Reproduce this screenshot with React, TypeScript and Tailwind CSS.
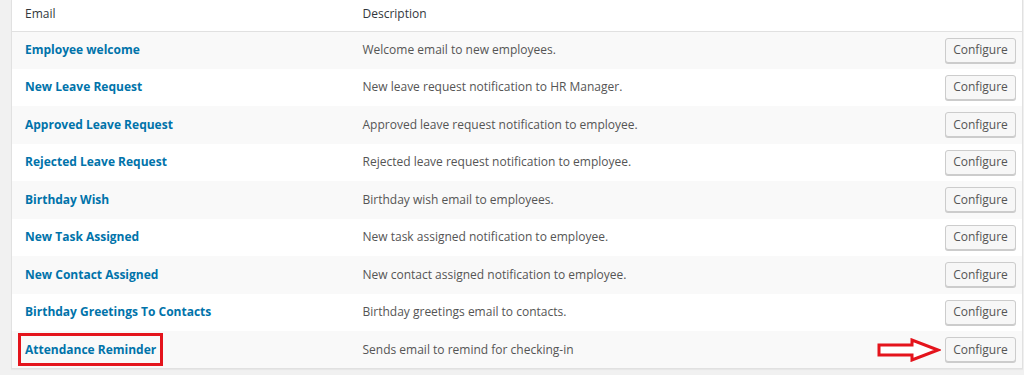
const rows = [
  { name: "Employee welcome", desc: "Welcome email to new employees." },
  { name: "New Leave Request", desc: "New leave request notification to HR Manager." },
  { name: "Approved Leave Request", desc: "Approved leave request notification to employee." },
  { name: "Rejected Leave Request", desc: "Rejected leave request notification to employee." },
  { name: "Birthday Wish", desc: "Birthday wish email to employees." },
  { name: "New Task Assigned", desc: "New task assigned notification to employee." },
  { name: "New Contact Assigned", desc: "New contact assigned notification to employee." },
  { name: "Birthday Greetings To Contacts", desc: "Birthday greetings email to contacts." },
  { name: "Attendance Reminder", desc: "Sends email to remind for checking-in", marked: true },
];

function RedArrow() {
  return (
    <svg width="64" height="24" viewBox="0 0 64 24" className="shrink-0">
      <polygon
        points="2,7 35,7 35,2 61,12 35,22 35,17 2,17"
        fill="#fff"
        stroke="#e4141c"
        strokeWidth="3"
        strokeLinejoin="miter"
      />
    </svg>
  );
}

function ConfigureButton() {
  return (
    <button className="h-[25px] w-[71px] rounded-[3px] border border-[#cccccc] bg-[#f7f7f7] text-[12px] text-[#555] shadow-[0_1px_0_#cccccc]">
      Configure
    </button>
  );
}

export default function App() {
  return (
    <div
      className="min-h-[375px] w-[1024px] bg-[#f1f1f1] pl-[11px] pr-px"
      style={{ fontFamily: '"Open Sans", "Noto Sans", sans-serif' }}
    >
      <table className="w-full table-fixed border-collapse border-x border-b border-[#e1e1e1] bg-white text-[12px] shadow-[0_1px_1px_rgba(0,0,0,0.04)]">
        <thead>
          <tr className="h-[31px] border-b border-[#e1e1e1]">
            <th className="w-[341px] pb-[3px] pl-[13px] text-left font-normal text-[#32373c]">Email</th>
            <th className="pb-[3px] pl-[10px] text-left font-normal text-[#32373c]">Description</th>
            <th className="w-[180px]" />
          </tr>
        </thead>
        <tbody>
          {rows.map((r, i) => (
            <tr key={r.name} className={i % 2 === 0 ? "h-[37.5px] bg-[#f9f9f9]" : "h-[37.5px] bg-white"}>
              <td className="pl-[13px]">
                {r.marked ? (
                  <span className="-ml-[7px] inline-block border-[3px] border-[#e4141c] px-1 py-[5px] font-bold leading-[17px] text-[#0073aa]">
                    {r.name}
                  </span>
                ) : (
                  <a className="font-bold text-[#0073aa]">{r.name}</a>
                )}
              </td>
              <td className="pl-[10px] text-[#555]">{r.desc}</td>
              <td className="pr-[6px]">
                <div className="flex items-center justify-end gap-[4px]">
                  {r.marked && <RedArrow />}
                  <ConfigureButton />
                </div>
              </td>
            </tr>
          ))}
        </tbody>
      </table>
    </div>
  );
}
